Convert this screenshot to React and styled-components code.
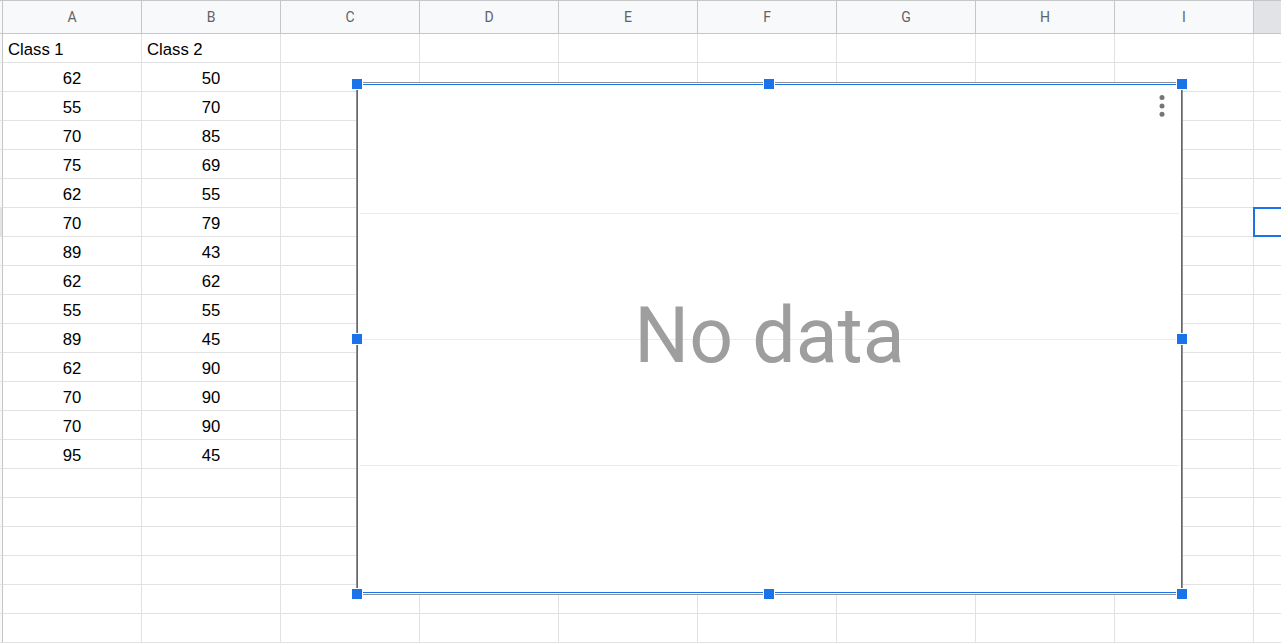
import React from 'react';
import styled, { createGlobalStyle } from 'styled-components';

const GlobalStyle = createGlobalStyle`
  html, body {
    margin: 0;
    padding: 0;
    background: #fff;
    overflow: hidden;
  }
  body {
    font-family: 'Liberation Sans', Arial, sans-serif;
  }
`;

// J is only partly on screen, its letter sits past the right edge
const COLUMNS = ['A', 'B', 'C', 'D', 'E', 'F', 'G', 'H', 'I', 'J'];
const VISIBLE_LABELS = 9;
const SCORES = [
  [62, 50], [55, 70], [70, 85], [75, 69], [62, 55], [70, 79], [89, 43],
  [62, 62], [55, 55], [89, 45], [62, 90], [70, 90], [70, 90], [95, 45],
];
const ROW_COUNT = 21;
const ACTIVE = { row: 7, col: 'J' };

const HANDLES = [
  [-5, -4], [407, -4], [820, -4],
  [-5, 251], [820, 251],
  [-5, 506], [407, 506], [820, 506],
];

const Sheet = styled.div`
  position: relative;
  width: 1281px;
  height: 644px;
  overflow: hidden;
`;

const Grid = styled.div`
  display: grid;
  width: max-content;
  grid-template-columns: 3px repeat(10, 139px);
  grid-template-rows: 34px;
  grid-auto-rows: 29px;
`;

const ColHeader = styled.div`
  box-sizing: border-box;
  display: flex;
  align-items: center;
  justify-content: center;
  background: ${p => (p.$active ? '#e1e3e6' : '#f8f9fa')};
  border-top: 1px solid #c4c7c5;
  border-right: 1px solid #c4c7c5;
  border-bottom: 1px solid #c4c7c5;
  font-family: Roboto, 'Liberation Sans', sans-serif;
  font-size: 14px;
  color: #5f6368;
`;

const RowHeader = styled.div`
  box-sizing: border-box;
  background: ${p => (p.$active ? '#e1e3e6' : '#f8f9fa')};
  border-right: 1px solid #c4c7c5;
  border-bottom: 1px solid #e1e1e1;
`;

const Cell = styled.div`
  box-sizing: border-box;
  position: relative;
  display: flex;
  align-items: flex-end;
  justify-content: ${p => (p.$align === 'center' ? 'center' : 'flex-start')};
  padding: 0 5px 3px;
  border-right: 1px solid #e2e2e3;
  border-bottom: 1px solid #e2e2e3;
  font-size: 16.7px;
  line-height: 19px;
  color: #000;
  white-space: nowrap;

  ${p => p.$selected && `
    &::after {
      content: '';
      position: absolute;
      top: -1px;
      left: -1px;
      right: 0;
      bottom: -1px;
      border: 2px solid #1a73e8;
    }
  `}
`;

const ChartFrame = styled.div`
  position: absolute;
  left: 356px;
  top: 82px;
  width: 827px;
  height: 513px;
  box-sizing: border-box;
  padding: 1px 0;
  border: 1px solid #8e9194;
  background: #fff;
`;

const ChartBody = styled.div`
  position: relative;
  box-sizing: border-box;
  height: 100%;
  padding: 0 2px;
  border: 1px solid #1a73e8;
`;

const Plot = styled.div`
  display: grid;
  grid-template-rows: 128px 126px 126px 1fr;
  height: 100%;
`;

const Band = styled.div`
  border-top: ${p => (p.$line ? '1px solid #ebebeb' : 'none')};
`;

const Message = styled.div`
  position: absolute;
  inset: 0;
  display: flex;
  align-items: center;
  justify-content: center;
  padding-bottom: 5px;
  font-family: Roboto, 'Liberation Sans', sans-serif;
  font-size: 77px;
  color: #9e9e9e;
`;

const MenuDots = styled.svg`
  position: absolute;
  top: 10px;
  right: 16px;
`;

const Handle = styled.div`
  position: absolute;
  width: 10px;
  height: 10px;
  background: #1a73e8;
  box-shadow: 0 0 0 1px #fff;
`;

function cellContent(row, colIndex) {
  if (colIndex > 1) return null;
  if (row === 1) return { text: `Class ${colIndex + 1}`, align: 'left' };
  const entry = SCORES[row - 2];
  if (!entry) return null;
  return { text: entry[colIndex], align: 'center' };
}

export default function App() {
  const rows = Array.from({ length: ROW_COUNT }, (_, i) => i + 1);

  return (
    <Sheet>
      <GlobalStyle />
      <Grid>
        <ColHeader />
        {COLUMNS.map((c, ci) => (
          <ColHeader key={c} $active={c === ACTIVE.col}>
            {ci < VISIBLE_LABELS ? c : null}
          </ColHeader>
        ))}
        {rows.map(r => (
          <React.Fragment key={r}>
            <RowHeader $active={r === ACTIVE.row} />
            {COLUMNS.map((c, ci) => {
              const content = cellContent(r, ci);
              return (
                <Cell
                  key={c}
                  $align={content ? content.align : 'left'}
                  $selected={r === ACTIVE.row && c === ACTIVE.col}
                >
                  {content ? content.text : null}
                </Cell>
              );
            })}
          </React.Fragment>
        ))}
      </Grid>

      <ChartFrame>
        <ChartBody>
          <Plot>
            <Band />
            <Band $line />
            <Band $line />
            <Band $line />
          </Plot>
          <Message>No data</Message>
          <MenuDots width="6" height="22" viewBox="0 0 6 22">
            <circle cx="3" cy="2.5" r="2.5" fill="#757575" />
            <circle cx="3" cy="11" r="2.5" fill="#757575" />
            <circle cx="3" cy="19.3" r="2.5" fill="#757575" />
          </MenuDots>
        </ChartBody>
        {HANDLES.map(([x, y]) => (
          <Handle key={`${x}-${y}`} style={{ left: x, top: y }} />
        ))}
      </ChartFrame>
    </Sheet>
  );
}
